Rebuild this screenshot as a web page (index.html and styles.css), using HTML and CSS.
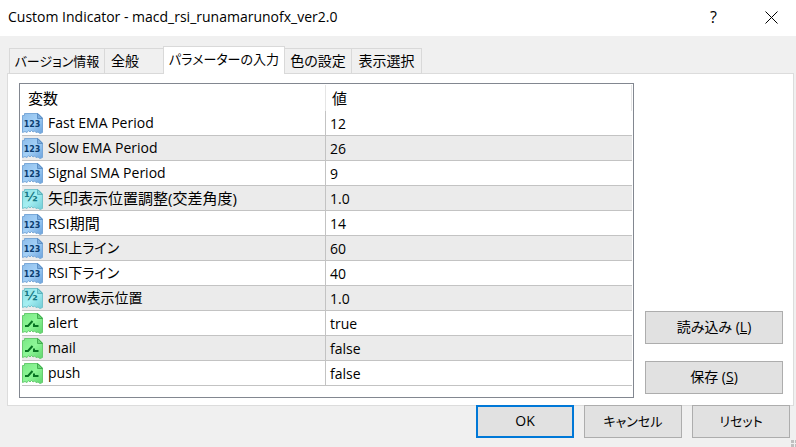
FILE: index.html
```
<!DOCTYPE html>
<html lang="ja">
<head>
    <meta charset="UTF-8">
    <meta name="viewport" content="width=device-width, initial-scale=1.0">
    <title>Custom Indicator</title>
    <link rel="stylesheet" href="styles.css">
</head>
<body>
    <!-- parameter type icons -->
    <svg class="sprite" aria-hidden="true">
        <defs>
            <linearGradient id="blue" x1="0" y1="0" x2="1" y2="1">
                <stop offset="0" stop-color="#8dbdea"/>
                <stop offset="0.5" stop-color="#a3d0f7"/>
                <stop offset="1" stop-color="#6ca2dc"/>
            </linearGradient>
            <linearGradient id="cyan" x1="0" y1="0" x2="1" y2="1">
                <stop offset="0" stop-color="#8fe0e4"/>
                <stop offset="0.5" stop-color="#a5eff2"/>
                <stop offset="1" stop-color="#6fcbd6"/>
            </linearGradient>
            <linearGradient id="green" x1="0" y1="0" x2="1" y2="1">
                <stop offset="0" stop-color="#7be886"/>
                <stop offset="0.5" stop-color="#8df797"/>
                <stop offset="1" stop-color="#5fd56d"/>
            </linearGradient>
            <path id="sheet" d="M.5 2.500H2.500V.5H16L20.500 5V19.500L18 20.500L16 19L14 19.500L12.500 18L11 19L9.500 17.500L8 19L6.500 17.500L5 19.500L3 18.500L.5 19.500Z"/>
            <path id="fold" d="M15.500 .5V5.500H20.500Z"/>
        </defs>
        <symbol id="icon-int" viewBox="0 0 21 21">
            <use href="#sheet" fill="url(#blue)" stroke="#79a8d8"/>
            <use href="#fold" fill="#7eaee0" stroke="#5f91c6"/>
        </symbol>
        <symbol id="icon-double" viewBox="0 0 21 21">
            <use href="#sheet" fill="url(#cyan)" stroke="#74c4cc"/>
            <use href="#fold" fill="#7fd3da" stroke="#5cb3bd"/>
        </symbol>
        <symbol id="icon-bool" viewBox="0 0 21 21">
            <use href="#sheet" fill="url(#green)" stroke="#67cb70"/>
            <use href="#fold" fill="#6bd877" stroke="#42ae50"/>
            <path d="M3 13H6L10.500 8M12 10.500V13H16.500" fill="none" stroke="#087323" stroke-width="2"/>
        </symbol>
    </svg>

    <div class="dialog">
        <header class="titlebar">
            <h1>Custom Indicator - macd_rsi_runamarunofx_ver2.0</h1>
            <button class="title-btn" type="button" aria-label="ヘルプ">?</button>
            <button class="title-btn" type="button" aria-label="閉じる">
                <svg width="13" height="13" viewBox="0 0 13 13"><path d="M.5 .5L12.500 12.500M12.500 .5L.5 12.500" stroke="#000" fill="none"/></svg>
            </button>
        </header>

        <nav class="tabs" role="tablist">
            <button class="tab long kana" type="button" role="tab">バージョン情報</button>
            <button class="tab short" type="button" role="tab">全般</button>
            <button class="tab active kana" type="button" role="tab" aria-selected="true">パラメーターの入力</button>
            <button class="tab" type="button" role="tab">色の設定</button>
            <button class="tab last" type="button" role="tab">表示選択</button>
        </nav>

        <main class="panel">
            <div class="list">
                <table>
                    <thead>
                        <tr><th class="name">変数</th><th>値</th></tr>
                    </thead>
                    <tbody>
                        <tr><td><svg class="icon int" viewBox="0 0 21 21"><use href="#icon-int"/><text x="10" y="14">123</text></svg>Fast EMA Period</td><td>12</td></tr>
                        <tr><td><svg class="icon int" viewBox="0 0 21 21"><use href="#icon-int"/><text x="10" y="14">123</text></svg>Slow EMA Period</td><td>26</td></tr>
                        <tr><td><svg class="icon int" viewBox="0 0 21 21"><use href="#icon-int"/><text x="10" y="14">123</text></svg>Signal SMA Period</td><td>9</td></tr>
                        <tr><td class="ja"><svg class="icon double" viewBox="0 0 21 21"><use href="#icon-double"/><text x="9" y="12">½</text></svg>矢印表示位置調整(交差角度)</td><td>1.0</td></tr>
                        <tr><td class="ja"><svg class="icon int" viewBox="0 0 21 21"><use href="#icon-int"/><text x="10" y="14">123</text></svg>RSI期間</td><td>14</td></tr>
                        <tr><td><svg class="icon int" viewBox="0 0 21 21"><use href="#icon-int"/><text x="10" y="14">123</text></svg>RSI上ライン</td><td>60</td></tr>
                        <tr><td><svg class="icon int" viewBox="0 0 21 21"><use href="#icon-int"/><text x="10" y="14">123</text></svg>RSI下ライン</td><td>40</td></tr>
                        <tr><td><svg class="icon double" viewBox="0 0 21 21"><use href="#icon-double"/><text x="9" y="12">½</text></svg>arrow表示位置</td><td>1.0</td></tr>
                        <tr><td><svg class="icon" viewBox="0 0 21 21"><use href="#icon-bool"/></svg>alert</td><td>true</td></tr>
                        <tr><td><svg class="icon" viewBox="0 0 21 21"><use href="#icon-bool"/></svg>mail</td><td>false</td></tr>
                        <tr><td><svg class="icon" viewBox="0 0 21 21"><use href="#icon-bool"/></svg>push</td><td>false</td></tr>
                    </tbody>
                </table>
            </div>
            <div class="side">
                <button class="btn" type="button">読み込み (<u>L</u>)</button>
                <button class="btn" type="button">保存 (<u>S</u>)</button>
            </div>
        </main>

        <footer class="actions">
            <button class="btn primary" type="button">OK</button>
            <button class="btn kana" type="button">キャンセル</button>
            <button class="btn kana" type="button">リセット</button>
        </footer>
        <svg class="grip" width="5" height="7" viewBox="0 0 5 7" aria-hidden="true"><path d="M0 0H3V3H0ZM4 0H5V3H4ZM0 4H3V7H0ZM4 4H5V7H4Z" fill="#bfbfbf"/></svg>
    </div>
</body>
</html>
```
FILE: styles.css
```
* {
    box-sizing: border-box;
}
body {
    margin: 0;
    background: #f0f0f0;
    color: #000;
    font-family: "Open Sans", "Noto Sans CJK JP", sans-serif;
    font-size: 14px;
    line-height: 20px;
    font-feature-settings: "palt";
}
button {
    font: inherit;
    font-feature-settings: inherit;
    color: inherit;
    padding: 0;
}
.sprite {
    position: absolute;
    width: 0;
    height: 0;
}
.dialog {
    position: relative;
    min-height: 100vh;
    background: #f0f0f0;
}

/* title bar */
.titlebar {
    display: flex;
    align-items: center;
    height: 36px;
    padding: 0 0 2px 8px;
    background: #fff;
}
.titlebar h1 {
    flex: 1;
    margin: 0;
    font-size: 14px;
    font-weight: 400;
}
.title-btn {
    display: flex;
    align-items: center;
    justify-content: center;
    width: 57px;
    height: 34px;
    border: none;
    background: none;
    font-size: 16px;
}
.title-btn:last-child {
    width: 50px;
    margin-left: 4px;
}

/* tabs */
.tabs {
    display: flex;
    align-items: flex-end;
    height: 38px;
    padding-left: 9px;
}
.tab {
    min-width: 68px;
    height: 26px;
    padding: 0 4px;
    margin-right: -1px;
    border: 1px solid #d9d9d9;
    background: #f0f0f0;
    white-space: nowrap;
}
.tab.long {
    min-width: 96px;
}
.tab.short {
    min-width: 60px;
    padding-right: 22px;
}
.tab.last {
    min-width: 71px;
}
.tab.active {
    z-index: 1;
    min-width: 122px;
    height: 28px;
    padding-bottom: 4px;
    border-bottom: none;
    background: #fff;
}
.kana {
    font-size: 13px;
}

/* main panel */
.panel {
    display: flex;
    gap: 11px;
    margin: -1px 2px 0 7px;
    padding: 9px 10px 7px 11px;
    border: 1px solid #dcdcdc;
    background: #fff;
}
.list {
    flex: 1;
    padding: 1px 1px 11px 2px;
    border: 1px solid #828790;
}
table {
    width: 100%;
    table-layout: fixed;
    border-collapse: separate;
    border-spacing: 0;
}
th {
    height: 26px;
    padding: 0 6px;
    border-right: 1px solid #e5e5e5;
    text-align: left;
    font-size: 15px;
    font-weight: 400;
}
th.name {
    width: 304px;
}
td {
    height: 25px;
    padding: 1px 4px 0;
    border-bottom: 1px solid #c3c3c3;
}
td:first-child {
    padding-left: 0;
    border-right: 1px solid #c3c3c3;
}
td.ja {
    font-size: 15px;
}
tbody tr:nth-child(even) {
    background: #ebebeb;
}
.icon {
    width: 21px;
    height: 21px;
    margin-right: 5px;
    vertical-align: -6px;
}
.icon text {
    text-anchor: middle;
    font-family: "DejaVu Sans", sans-serif;
    font-weight: bold;
}
.icon.int text {
    font-size: 8px;
    fill: #0c3d70;
}
.icon.double text {
    font-size: 13px;
    fill: #177984;
}

/* buttons */
.btn {
    width: 98px;
    height: 33px;
    padding-bottom: 2px;
    border: 1px solid #adadad;
    background: #e1e1e1;
}
.side {
    display: flex;
    flex-direction: column;
    justify-content: flex-end;
    gap: 17px;
    width: 138px;
    padding-bottom: 4px;
}
.side .btn {
    width: 100%;
}
.actions {
    display: flex;
    justify-content: flex-end;
    gap: 10px;
    margin-top: -1px;
    padding-right: 6px;
}
.btn.primary {
    border: 2px solid #0078d7;
}
.grip {
    position: absolute;
    right: 0;
    bottom: 0;
}
```
